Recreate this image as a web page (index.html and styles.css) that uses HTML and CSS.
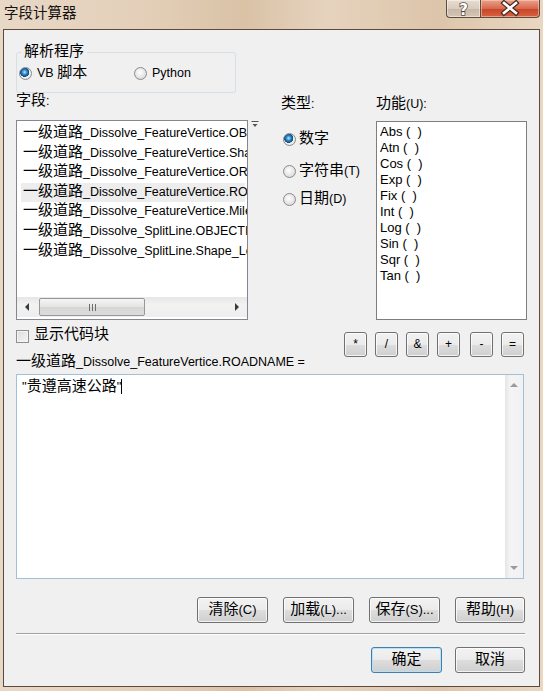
FILE: index.html
```html
<!DOCTYPE html>
<html lang="zh-CN">
<head>
    <meta charset="UTF-8">
    <meta name="viewport" content="width=device-width, initial-scale=1.0">
    <title>字段计算器</title>
    <link rel="stylesheet" href="styles.css">
</head>
<body>
    <div class="window">
        <div class="titlebar">
            <div class="title">字段计算器</div>
            <div class="caption-btns">
                <div class="cap-help">
                    <svg width="33" height="17" viewBox="0 0 33 17">
                        <text x="16.5" y="14.5" text-anchor="middle" class="help-glyph">?</text>
                    </svg>
                </div>
                <div class="cap-close">
                    <svg width="58" height="17" viewBox="0 0 58 17">
                        <path d="M23 3 L35 13 M35 3 L23 13" stroke="#4a2a1e" stroke-width="5" stroke-linecap="square"/>
                        <path d="M23 3 L35 13 M35 3 L23 13" stroke="#ffffff" stroke-width="2.6" stroke-linecap="square"/>
                    </svg>
                </div>
            </div>
        </div>

        <div class="client">
            <fieldset class="parser">
                <legend><span class="cn">解析程序</span></legend>
                <div class="parser-row">
                    <label class="radio parser-vb"><span class="dot on"></span><span class="rtext">VB <span class="cn">脚本</span></span></label>
                    <label class="radio"><span class="dot"></span><span class="rtext">Python</span></label>
                </div>
            </fieldset>

            <div class="main">
                <div class="col-fields">
                    <div class="lbl"><span class="cn">字段</span>:</div>
                    <div class="fields-row">
                        <div class="fieldbox">
                            <div class="fieldbox-list">
                                <div class="item"><span class="cn">一级道路</span>_Dissolve_FeatureVertice.OBJECTID</div>
                                <div class="item"><span class="cn">一级道路</span>_Dissolve_FeatureVertice.Shape</div>
                                <div class="item"><span class="cn">一级道路</span>_Dissolve_FeatureVertice.ORIG_FID</div>
                                <div class="item hover"><span class="cn">一级道路</span>_Dissolve_FeatureVertice.ROADNAME</div>
                                <div class="item"><span class="cn">一级道路</span>_Dissolve_FeatureVertice.Mileage</div>
                                <div class="item"><span class="cn">一级道路</span>_Dissolve_SplitLine.OBJECTID</div>
                                <div class="item"><span class="cn">一级道路</span>_Dissolve_SplitLine.Shape_Length</div>
                            </div>
                            <div class="hscroll">
                                <div class="sb-btn"><span class="tri-left"></span></div>
                                <div class="sb-track">
                                    <div class="sb-thumb"><span class="grip"></span></div>
                                </div>
                                <div class="sb-btn"><span class="tri-right"></span></div>
                            </div>
                        </div>
                        <svg class="sort-icon" width="8" height="7" viewBox="0 0 8 7">
                            <path d="M0.5 0.5 H7.5" stroke="#555" stroke-width="1"/>
                            <path d="M1.5 3 H6.5 L4 6 Z" fill="#555"/>
                        </svg>
                    </div>
                </div>

                <div class="col-types">
                    <div class="lbl"><span class="cn">类型</span>:</div>
                    <label class="radio type-num"><span class="dot on"></span><span class="rtext"><span class="cn">数字</span></span></label>
                    <label class="radio type-str"><span class="dot"></span><span class="rtext"><span class="cn">字符串</span>(T)</span></label>
                    <label class="radio type-date"><span class="dot"></span><span class="rtext"><span class="cn">日期</span>(D)</span></label>
                </div>

                <div class="col-funcs">
                    <div class="lbl"><span class="cn">功能</span>(U):</div>
                    <div class="funcbox">
                        <div class="func">Abs (  )</div>
                        <div class="func">Atn (  )</div>
                        <div class="func">Cos (  )</div>
                        <div class="func">Exp (  )</div>
                        <div class="func">Fix (  )</div>
                        <div class="func">Int (  )</div>
                        <div class="func">Log (  )</div>
                        <div class="func">Sin (  )</div>
                        <div class="func">Sqr (  )</div>
                        <div class="func">Tan (  )</div>
                    </div>
                </div>
            </div>

            <div class="expr-head">
                <div class="expr-left">
                    <label class="check"><span class="box"></span><span class="rtext"><span class="cn">显示代码块</span></span></label>
                    <div class="expr-label"><span class="cn">一级道路</span>_Dissolve_FeatureVertice.ROADNAME =</div>
                </div>
                <div class="ops">
                    <div class="btn op">*</div>
                    <div class="btn op">/</div>
                    <div class="btn op">&amp;</div>
                    <div class="btn op">+</div>
                    <div class="btn op op-minus">-</div>
                    <div class="btn op">=</div>
                </div>
            </div>

            <div class="editor">
                <div class="editor-text">"<span class="cn">贵遵高速公路</span>"<span class="caret"></span></div>
                <div class="vscroll">
                    <span class="tri-up"></span>
                    <span class="tri-down"></span>
                </div>
            </div>

            <div class="btn-row">
                <div class="btn"><span class="cn">清除</span>(C)</div>
                <div class="btn"><span class="cn">加载</span>(L)...</div>
                <div class="btn"><span class="cn">保存</span>(S)...</div>
                <div class="btn"><span class="cn">帮助</span>(H)</div>
            </div>

            <div class="separator"></div>

            <div class="btn-row ok-row">
                <div class="btn default"><span class="cn">确定</span></div>
                <div class="btn"><span class="cn">取消</span></div>
            </div>
        </div>
    </div>
</body>
</html>
```

FILE: styles.css
```css
html, body {
    margin: 0;
    padding: 0;
}

body {
    font-family: "Liberation Sans", "Noto Sans CJK SC", sans-serif;
    font-size: 12.5px;
    color: #000;
    background: #e2cdb5;
}

/* chinese glyphs are drawn larger than the latin ones, as in the dialog */
.cn {
    font-family: "Noto Sans CJK SC", "Liberation Sans", sans-serif;
    font-size: 15px;
    line-height: 12px;
}

.window {
    width: 543px;
    height: 691px;
    display: flex;
    flex-direction: column;
    background: linear-gradient(90deg, #e8d8c6 0%, #e4d0ba 25%, #d9c2a6 45%, #e6d3be 60%, #dcc5aa 80%, #e9d7c2 100%);
}

/* title bar */
.titlebar {
    height: 29px;
    display: flex;
    align-items: flex-start;
    padding: 0 3px 0 4px;
    box-sizing: border-box;
}

.title {
    font-family: "Noto Sans CJK SC", sans-serif;
    font-size: 14.5px;
    line-height: 24px;
    color: #161210;
}

.caption-btns {
    margin-left: auto;
    display: flex;
}

.cap-help, .cap-close {
    height: 17px;
    border: 1px solid #5e4b3e;
    border-top: none;
}

.cap-help {
    width: 33px;
    border-right: none;
    border-radius: 0 0 0 4px;
    background: linear-gradient(#e8ddd2 0%, #d9cbbd 50%, #c8b7a6 51%, #d4c5b6 100%);
    box-shadow: inset 0 0 0 1px rgba(255, 255, 255, 0.45);
}

.cap-close {
    width: 58px;
    border-radius: 0 0 4px 0;
    background: linear-gradient(#e9a18c 0%, #d8694d 50%, #c7442a 51%, #d8623f 100%);
    box-shadow: inset 0 0 0 1px rgba(255, 220, 200, 0.5);
}

.cap-help svg, .cap-close svg {
    display: block;
}

.help-glyph {
    font-family: "DejaVu Sans", sans-serif;
    font-size: 15px;
    font-weight: bold;
    fill: #fff;
    stroke: #5a4a3e;
    stroke-width: 1.5px;
    paint-order: stroke;
}

/* dialog body */
.client {
    flex: 1;
    margin: 0 3px 4px 3px;
    border: 1px solid #5b4a3d;
    background: #f0f0f0;
    padding: 0 12px;
    display: flex;
    flex-direction: column;
}

.parser {
    width: 220px;
    box-sizing: border-box;
    margin: 14px 0 0 0;
    padding: 4px 2px 11px 2px;
    border: 1px solid #d5dfe5;
    border-radius: 3px;
    min-width: 0;
}

.parser legend {
    margin-left: 2px;
    padding: 0 3px;
    line-height: 17px;
    height: 17px;
}

.parser-row {
    display: flex;
    height: 16px;
    align-items: center;
}

.parser-vb {
    width: 115px;
}

.radio {
    display: flex;
    align-items: center;
    height: 17px;
    white-space: nowrap;
}

.rtext {
    line-height: 17px;
    height: 17px;
}

.dot {
    width: 13px;
    height: 13px;
    box-sizing: border-box;
    border-radius: 50%;
    border: 1px solid #8b8b8b;
    background: radial-gradient(circle at 45% 40%, #ffffff 0%, #ececec 40%, #cfcfcf 100%);
    margin-right: 5px;
    flex: none;
}

.dot.on {
    background: radial-gradient(circle at 42% 38%, #bfe8ff 0%, #3a96d6 22%, #11548d 42%, #1b4e7a 48%, #f4f4f4 52%, #d6d6d6 100%);
}

/* main row: fields, types, functions */
.main {
    display: flex;
    height: 227px;
}

.lbl {
    line-height: 17px;
    height: 17px;
    white-space: nowrap;
}

.col-fields {
    width: 265px;
    flex: none;
}

.fields-row {
    display: flex;
    align-items: flex-start;
    margin-top: 10px;
}

.fieldbox {
    width: 232px;
    height: 200px;
    box-sizing: border-box;
    border: 1px solid #828790;
    background: #fff;
    display: flex;
    flex-direction: column;
}

.fieldbox-list {
    flex: 1;
    overflow: hidden;
    padding: 3px 2px 0 4px;
}

.item {
    height: 19.6px;
    line-height: 19.6px;
    padding-left: 2px;
    white-space: nowrap;
}

.item.hover {
    background: #ededed;
}

.hscroll {
    height: 20px;
    margin: 0 0 2px 0;
    display: flex;
    background: linear-gradient(#e6e6e6, #f2f2f2 40%, #eeeeee);
}

.sb-btn {
    width: 20px;
    display: flex;
    align-items: center;
    justify-content: center;
}

.tri-left {
    border-top: 4px solid transparent;
    border-bottom: 4px solid transparent;
    border-right: 4px solid #3a3a3a;
}

.tri-right {
    border-top: 4px solid transparent;
    border-bottom: 4px solid transparent;
    border-left: 4px solid #3a3a3a;
}

.sb-track {
    flex: 1;
    padding: 1px 0;
}

.sb-thumb {
    width: 106px;
    height: 100%;
    margin-left: 2px;
    box-sizing: border-box;
    border: 1px solid #979797;
    border-radius: 2px;
    background: linear-gradient(#f5f5f5, #e4e4e4 50%, #d6d6d6 51%, #dcdcdc);
    display: flex;
    align-items: center;
    justify-content: center;
}

.grip {
    width: 7px;
    height: 7px;
    background: repeating-linear-gradient(90deg, #6e6e6e 0, #6e6e6e 1px, transparent 1px, transparent 3px);
}

.sort-icon {
    margin-left: 3px;
    margin-top: 1px;
}

.col-types {
    width: 95px;
    flex: none;
}

.col-types .lbl {
    margin-top: 3px;
}

.col-types .radio {
    padding-left: 2px;
}

.col-types .dot {
    margin-right: 3px;
}

.type-num {
    margin-top: 18px;
}

.type-str {
    margin-top: 14.5px;
}

.type-date {
    margin-top: 11px;
}

.col-funcs {
    width: 151px;
    flex: none;
}

.col-funcs .lbl {
    margin-top: 3px;
}

.funcbox {
    margin-top: 8px;
    height: 199px;
    box-sizing: border-box;
    border: 1px solid #7e7e7e;
    background: #fff;
    padding: 2px 0 0 3px;
}

.func {
    height: 16px;
    line-height: 16px;
    font-size: 13px;
    white-space: pre;
}

/* expression area */
.expr-head {
    display: flex;
    margin-top: 7px;
    margin-right: 3px;
}

.expr-left {
    flex: 1;
}

.check {
    display: flex;
    align-items: center;
    height: 17px;
}

.box {
    width: 13px;
    height: 13px;
    box-sizing: border-box;
    border: 1px solid #8e8f8f;
    background: linear-gradient(135deg, #dcdcdc, #f6f6f6);
    box-shadow: inset 0 0 0 1px #f4f4f4;
    margin: 2px 5px 0 0;
}

.expr-label {
    margin-top: 10px;
    line-height: 17px;
    height: 17px;
    white-space: nowrap;
}

.ops {
    display: flex;
    gap: 8px;
    margin-top: 5px;
}

.btn {
    width: 71px;
    height: 26px;
    box-sizing: border-box;
    border: 1px solid #707070;
    border-radius: 3px;
    background: linear-gradient(#f2f2f2 0%, #ebebeb 50%, #dddddd 51%, #cfcfcf 100%);
    box-shadow: inset 0 0 0 1px rgba(255, 255, 255, 0.75);
    text-align: center;
    line-height: 24px;
    font-size: 13px;
    white-space: nowrap;
}

.btn.op {
    width: 23px;
    height: 25px;
    line-height: 23px;
    font-size: 12px;
}

.btn.op.op-minus {
    margin-left: 2px;
}

.btn.default {
    border-color: #3c7fb1;
    box-shadow: inset 0 0 0 1px #b9e0f5;
}

.editor {
    margin: 3px 3px 0 0;
    height: 205px;
    box-sizing: border-box;
    border: 1px solid #a2c0d8;
    background: #fff;
    display: flex;
}

.editor-text {
    flex: 1;
    padding: 3px 0 0 5px;
    line-height: 17px;
    font-size: 13px;
}

.caret {
    display: inline-block;
    width: 1px;
    height: 15px;
    background: #000;
    vertical-align: -3px;
}

.vscroll {
    width: 18px;
    background: linear-gradient(90deg, #e6e6e6, #f4f4f4 30%, #f1f1f1);
    display: flex;
    flex-direction: column;
    align-items: center;
    justify-content: space-between;
    padding: 8px 0 8px;
}

.tri-up {
    border-left: 4px solid transparent;
    border-right: 4px solid transparent;
    border-bottom: 4px solid #9a9a9a;
}

.tri-down {
    border-left: 4px solid transparent;
    border-right: 4px solid transparent;
    border-top: 4px solid #9a9a9a;
}

.btn-row {
    display: flex;
    justify-content: flex-end;
    gap: 15px;
    margin: 18px 2px 0 0;
}

.btn-row .btn:last-child {
    width: 70px;
}

.separator {
    margin: 10px 2px 0 0;
    border-top: 1px solid #a0a0a0;
    border-bottom: 1px solid #ffffff;
}

.ok-row {
    gap: 13px;
    margin-top: 12px;
}
```
